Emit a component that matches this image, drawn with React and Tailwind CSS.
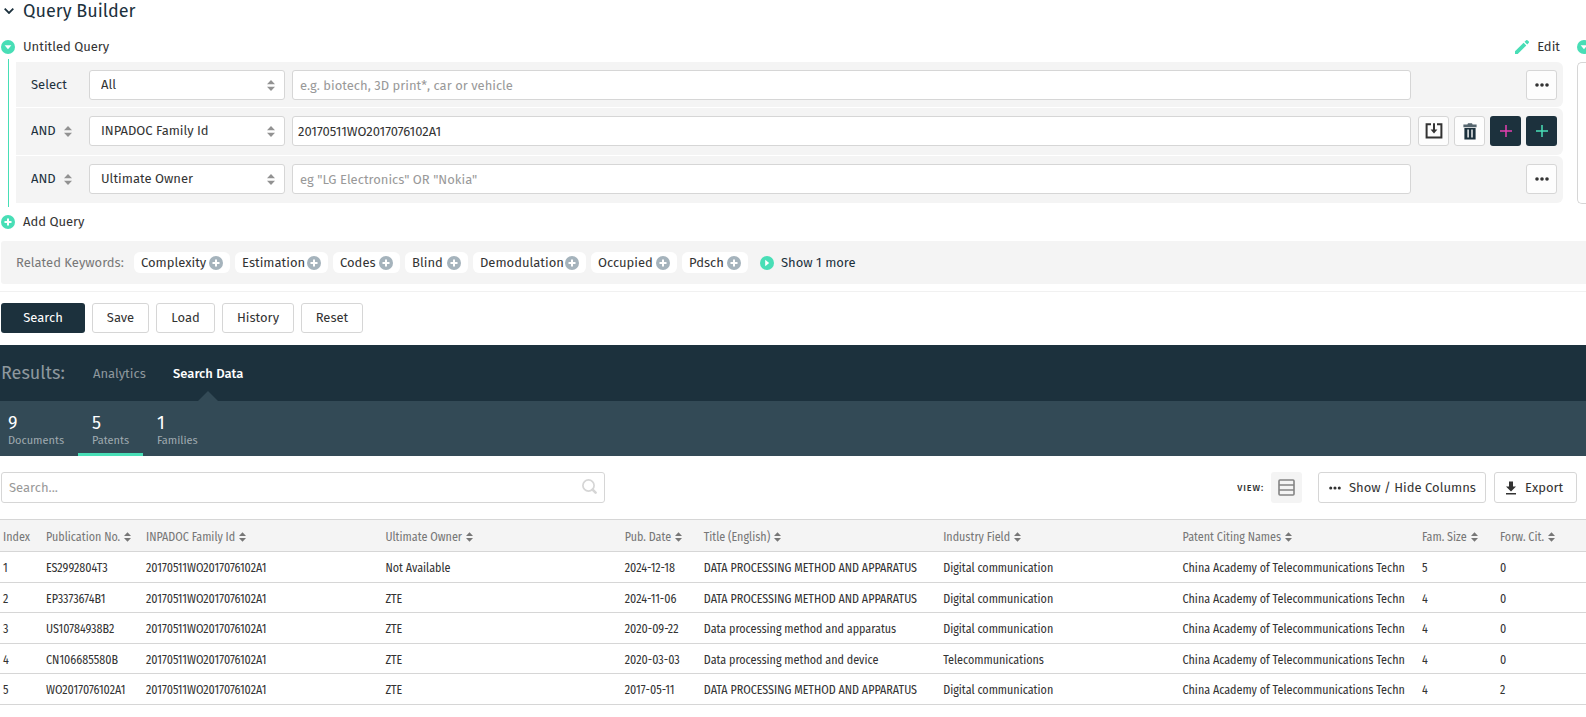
import React, { useState } from "react";

const keywords = [
  { label: "Complexity", width: "w-[96px]" },
  { label: "Estimation", width: "w-[93px]" },
  { label: "Codes", width: "w-[67px]" },
  { label: "Blind", width: "w-[63px]" },
  { label: "Demodulation", width: "w-[113px]" },
  { label: "Occupied", width: "w-[86px]" },
  { label: "Pdsch", width: "w-[66px]" },
];

const columns = [
  { label: "Index", width: "w-[43px]", sortable: false },
  { label: "Publication No.", width: "w-[100px]", sortable: true },
  { label: "INPADOC Family Id", width: "", sortable: true },
  { label: "Ultimate Owner", width: "", sortable: true },
  { label: "Pub. Date", width: "w-[79px]", sortable: true },
  { label: "Title (English)", width: "", sortable: true },
  { label: "Industry Field", width: "", sortable: true },
  { label: "Patent Citing Names", width: "", sortable: true },
  { label: "Fam. Size", width: "w-[78px]", sortable: true },
  { label: "Forw. Cit.", width: "w-[89px]", sortable: true },
];

const family = "20170511WO2017076102A1";
const citing = "China Academy of Telecommunications Techn";

const patents = [
  ["1", "ES2992804T3", family, "Not Available", "2024-12-18", "DATA PROCESSING METHOD AND APPARATUS", "Digital communication", citing, "5", "0"],
  ["2", "EP3373674B1", family, "ZTE", "2024-11-06", "DATA PROCESSING METHOD AND APPARATUS", "Digital communication", citing, "4", "0"],
  ["3", "US10784938B2", family, "ZTE", "2020-09-22", "Data processing method and apparatus", "Digital communication", citing, "4", "0"],
  ["4", "CN106685580B", family, "ZTE", "2020-03-03", "Data processing method and device", "Telecommunications", citing, "4", "0"],
  ["5", "WO2017076102A1", family, "ZTE", "2017-05-11", "DATA PROCESSING METHOD AND APPARATUS", "Digital communication", citing, "4", "2"],
];

const fieldOptions = ["All", "INPADOC Family Id", "Ultimate Owner"];

function SortArrows({ className }) {
  return (
    <svg viewBox="0 0 8 11" className={className} fill="currentColor" aria-hidden="true">
      <path d="M4 0 8 4.3H0zM4 11 0 6.7h8z" />
    </svg>
  );
}

function Dots({ className }) {
  return (
    <svg viewBox="0 0 14 4" className={className} fill="currentColor" aria-hidden="true">
      <circle cx="2" cy="2" r="1.8" />
      <circle cx="7" cy="2" r="1.8" />
      <circle cx="12" cy="2" r="1.8" />
    </svg>
  );
}

function CirclePlus({ className }) {
  return (
    <svg viewBox="0 0 14 14" className={className} aria-hidden="true">
      <circle cx="7" cy="7" r="7" fill="currentColor" />
      <path d="M7 3.5v7M3.5 7h7" stroke="#fff" strokeWidth="2" />
    </svg>
  );
}

function CircleDown() {
  return (
    <svg viewBox="0 0 14 14" className="size-3.5 shrink-0 text-[#48deb6]" aria-hidden="true">
      <circle cx="7" cy="7" r="7" fill="currentColor" />
      <path d="M3.6 5.2h6.8L7 9.2z" fill="#fff" />
    </svg>
  );
}

function IconButton({ label, dark, children }) {
  return (
    <button
      type="button"
      aria-label={label}
      className={
        dark
          ? "flex h-[30px] w-[31px] items-center justify-center rounded-[3px] bg-[#1c313d]"
          : "flex h-[30px] w-[31px] items-center justify-center rounded-[3px] border border-[#d6d6d6] bg-[#fdfdfd] text-[#333]"
      }
    >
      {children}
    </button>
  );
}

function Operator({ id }) {
  return (
    <div className="relative flex w-[41px] items-center">
      <select
        id={id}
        aria-label="Operator"
        defaultValue="AND"
        className="h-6 w-full appearance-none bg-transparent text-[13px] text-[#1c313d] outline-none"
      >
        <option>AND</option>
        <option>OR</option>
        <option>NOT</option>
      </select>
      <SortArrows className="pointer-events-none absolute right-0 h-[11px] w-2 text-[#929292]" />
    </div>
  );
}

function QueryRow({ id, first, field, value, placeholder, children }) {
  return (
    <div
      className={`flex items-center rounded-r-md bg-[#f4f4f4] pt-2 pr-1.5 pl-[15px] ${
        first ? "pb-[7px]" : "pb-[9px]"
      }`}
    >
      <div className="w-[58px] shrink-0 text-[13px] text-[#1c313d]">
        {first ? <label htmlFor={id}>Select</label> : <Operator id={id + "-op"} />}
      </div>
      <div className="relative flex w-[196px] shrink-0 items-center">
        <select
          id={id}
          aria-label="Field"
          defaultValue={field}
          className="h-[30px] w-full appearance-none rounded-[3px] border border-[#d6d6d6] bg-white pr-6 pl-[11px] text-[13px] text-[#333] outline-none"
        >
          {fieldOptions.map((o) => (
            <option key={o}>{o}</option>
          ))}
        </select>
        <SortArrows className="pointer-events-none absolute right-2.5 h-[11px] w-2 text-[#929292]" />
      </div>
      <input
        type="text"
        aria-label="Query text"
        defaultValue={value}
        placeholder={placeholder}
        className={`ml-[7px] h-[30px] min-w-0 flex-1 rounded-[3px] border border-[#d6d6d6] bg-white text-[13px] text-[#333] outline-none placeholder:text-[#999] ${
          value ? "px-[5px]" : "px-[7px]"
        }`}
      />
      <div className="ml-[7px] flex w-[139px] shrink-0 justify-end gap-[5px]">{children}</div>
    </div>
  );
}

export default function App() {
  const [search, setSearch] = useState("");

  return (
    <div className="w-full overflow-hidden bg-white pb-3 font-['Fira_Sans',Roboto,sans-serif] text-[13px] leading-4 text-[#333]">
      {/* Title */}
      <header className="flex h-[21px] items-center pl-1">
        <svg viewBox="0 0 10 6" className="h-1.5 w-2.5 text-[#1c313d]" fill="none" stroke="currentColor" strokeWidth="1.8" aria-hidden="true">
          <path d="M.7.7 5 5 9.3.7" />
        </svg>
        <h1 className="ml-[9px] text-lg leading-5 text-[#1c313d]">Query Builder</h1>
      </header>

      {/* Query editor */}
      <div className="mt-4 flex">
        <section className="min-w-0 flex-1">
          <div className="flex h-5 items-center justify-between pr-[3px] pl-px">
            <div className="flex items-center gap-2">
              <CircleDown />
              <span>Untitled Query</span>
            </div>
            <button type="button" className="flex items-center gap-2">
              <svg viewBox="0 0 14 14" className="size-3.5 text-[#48deb6]" fill="currentColor" aria-hidden="true">
                <path d="M0 11.3 8.6 2.7l2.7 2.7L2.7 14H0zM9.5 1.8 10.9.4a1.3 1.3 0 0 1 1.8 0l.9.9a1.3 1.3 0 0 1 0 1.8l-1.4 1.4z" />
              </svg>
              Edit
            </button>
          </div>
          <div className="flex pt-0.5">
            <div className="mr-[7px] ml-2 w-px bg-[#48deb6]" />
            <div className="mt-[3px] mb-1 flex min-w-0 flex-1 flex-col gap-px">
              <QueryRow id="q1" first field="All" placeholder="e.g. biotech, 3D print*, car or vehicle">
                <IconButton label="More">
                  <Dots className="h-1 w-3.5" />
                </IconButton>
              </QueryRow>
              <QueryRow id="q2" field="INPADOC Family Id" value="20170511WO2017076102A1">
                <IconButton label="Import">
                  <svg viewBox="0 0 18 16" className="h-4 w-[18px]" fill="none" stroke="currentColor" strokeWidth="2" aria-hidden="true">
                    <path d="M6 1.2H1.6v13.3h14.8V1.2H12M9 .3v8" />
                    <path d="M5.6 6.6 9 10.4l3.4-3.8z" fill="currentColor" stroke="none" />
                  </svg>
                </IconButton>
                <IconButton label="Delete">
                  <svg viewBox="0 0 14 17" className="h-[17px] w-3.5 text-[#1c313d]" fill="currentColor" aria-hidden="true">
                    <path d="M.4 1.6h4L5 .2h4l.6 1.4h4v2.6H.4z" opacity=".75" />
                    <path fillRule="evenodd" d="M1.4 5h11.2v11.6H1.4zM4.4 6.4v8.2h1.4V6.4zM8.3 6.4v8.2h1.4V6.4z" />
                  </svg>
                </IconButton>
                <IconButton label="Add group" dark>
                  <svg viewBox="0 0 12 12" className="size-3 text-[#e43fb0]" stroke="currentColor" strokeWidth="1.5" aria-hidden="true">
                    <path d="M6 0v12M0 6h12" />
                  </svg>
                </IconButton>
                <IconButton label="Add row" dark>
                  <svg viewBox="0 0 12 12" className="size-3 text-[#48deb6]" stroke="currentColor" strokeWidth="1.5" aria-hidden="true">
                    <path d="M6 0v12M0 6h12" />
                  </svg>
                </IconButton>
              </QueryRow>
              <QueryRow id="q3" field="Ultimate Owner" placeholder={'eg "LG Electronics" OR "Nokia"'}>
                <IconButton label="More">
                  <Dots className="h-1 w-3.5" />
                </IconButton>
              </QueryRow>
            </div>
          </div>
        </section>

        {/* Next query panel, continues past the right edge */}
        <section className="ml-3.5 flex w-[9px] shrink-0 flex-col">
          <div className="flex h-5 items-center">
            <CircleDown />
          </div>
          <div className="mt-[5px] mb-[3px] flex-1 rounded-l-[5px] border border-r-0 border-[#d6d6d6]" />
        </section>
      </div>

      <button type="button" className="mt-[7px] ml-px flex h-4 items-center gap-2">
        <CirclePlus className="size-3.5 text-[#48deb6]" />
        Add Query
      </button>

      {/* Keywords */}
      <div className="mt-[11px] ml-px flex h-[43px] items-center rounded-l-[3px] bg-[#f4f4f4] pl-[15px]">
        <span className="w-[118px] text-[#777]">Related Keywords:</span>
        <div className="flex gap-[5px]">
          {keywords.map((k) => (
            <button
              key={k.label}
              type="button"
              className={`flex h-[21px] items-center justify-between rounded-md bg-white px-[7px] ${k.width}`}
            >
              {k.label}
              <CirclePlus className="size-3.5 text-[#a5b3bc]" />
            </button>
          ))}
        </div>
        <button type="button" className="ml-3 flex items-center gap-[7px] text-[#1c313d]">
          <svg viewBox="0 0 14 14" className="size-3.5 text-[#48deb6]" aria-hidden="true">
            <circle cx="7" cy="7" r="7" fill="currentColor" />
            <path d="M5.2 3.8 9.2 7l-4 3.2z" fill="#fff" />
          </svg>
          Show 1 more
        </button>
      </div>

      {/* Actions */}
      <div className="mt-[7px] flex gap-[7px] border-t border-[#f1f1f1] pt-[11px] pb-3 pl-px">
        <button type="button" className="h-[30px] w-[84px] rounded-[3px] bg-[#1c313d] text-white">Search</button>
        <button type="button" className="h-[30px] w-[57px] rounded-[3px] border border-[#d6d6d6]">Save</button>
        <button type="button" className="h-[30px] w-[59px] rounded-[3px] border border-[#d6d6d6]">Load</button>
        <button type="button" className="h-[30px] w-[72px] rounded-[3px] border border-[#d6d6d6]">History</button>
        <button type="button" className="h-[30px] w-[62px] rounded-[3px] border border-[#d6d6d6]">Reset</button>
      </div>

      {/* Results tabs */}
      <nav className="flex h-14 items-center bg-[#1c313d] pl-px">
        <h2 className="w-[92px] text-lg leading-5 text-[#8e989e]">Results:</h2>
        <a href="#analytics" className="flex h-full w-20 items-center pt-0.5 text-[#8e989e]">Analytics</a>
        <a href="#data" className="relative flex h-full items-center pt-0.5 font-medium text-white">
          Search Data
          <svg viewBox="0 0 20 10" className="absolute bottom-0 left-1/2 h-2.5 w-5 -translate-x-1/2 text-[#334a56]" fill="currentColor" aria-hidden="true">
            <path d="M0 10 10 0l10 10z" />
          </svg>
        </a>
      </nav>
      <div className="flex h-[55px] bg-[#334a56] text-[11px] text-[#a0abb1]">
        <button type="button" className="w-[78px] border-b-[3px] border-transparent pt-2 pl-2 text-left">
          <span className="block text-lg leading-5 text-white">9</span>
          Documents
        </button>
        <button type="button" className="w-[65px] border-b-[3px] border-[#48deb6] pt-2 pl-3.5 text-left">
          <span className="block text-lg leading-5 text-white">5</span>
          Patents
        </button>
        <button type="button" className="border-b-[3px] border-transparent pt-2 pl-3.5 text-left">
          <span className="block text-lg leading-5 text-white">1</span>
          Families
        </button>
      </div>

      {/* Table tools */}
      <div className="flex items-center justify-between py-4 pr-[9px] pl-px">
        <div className="relative w-[604px]">
          <input
            type="text"
            aria-label="Search results"
            placeholder="Search..."
            value={search}
            onChange={(e) => setSearch(e.target.value)}
            className="block h-[31px] w-full rounded-[3px] border border-[#d6d6d6] pr-8 pl-[7px] text-[13px] outline-none placeholder:text-[#999]"
          />
          <svg viewBox="0 0 15 15" className="absolute top-[7px] right-2 size-[15px] text-[#d6d6d6]" fill="none" stroke="currentColor" aria-hidden="true">
            <circle cx="6.5" cy="6.5" r="5.6" strokeWidth="1.7" />
            <path d="m10.6 10.6 3 3" strokeWidth="2.6" strokeLinecap="round" />
          </svg>
        </div>
        <div className="flex items-center whitespace-nowrap">
          <span className="mr-[7px] text-[9px] font-medium tracking-widest">VIEW:</span>
          <button type="button" aria-label="Table view" className="flex size-[31px] items-center justify-center rounded-[3px] bg-[#f4f4f4]">
            <svg viewBox="0 0 17 17" className="size-[17px] text-[#848484]" fill="none" stroke="currentColor" strokeWidth="1.6" aria-hidden="true">
              <rect x="1" y="1" width="15" height="15" rx="1" />
              <path d="M1 6h15M1 11h15" />
            </svg>
          </button>
          <button type="button" className="ml-4 flex h-[31px] w-[168px] items-center rounded-[3px] border border-[#d6d6d6] pl-2.5">
            <Dots className="mr-2 h-1 w-3" />
            Show / Hide Columns
          </button>
          <button type="button" className="ml-2 flex h-[31px] w-[83px] items-center rounded-[3px] border border-[#d6d6d6] pl-2.5">
            <svg viewBox="0 0 12 14" className="mr-2 h-3.5 w-3" fill="currentColor" aria-hidden="true">
              <path d="M4 .5h4v5h3L6 10.5 1 5.5h3zM1 12h10v1.5H1z" />
            </svg>
            Export
          </button>
        </div>
      </div>

      <table className="w-full table-fixed border-t border-[#d6d6d6] text-left font-['Fira_Sans_Condensed','Liberation_Sans_Narrow',Roboto,sans-serif] text-xs whitespace-nowrap">
        <thead>
          <tr className="h-8 border-b border-[#d6d6d6] bg-[#f4f4f4] text-[#777]">
            {columns.map((c) => (
              <th key={c.label} scope="col" className={`p-0 pt-0.5 pl-[3px] font-normal ${c.width}`}>
                {c.sortable ? (
                  <button type="button" className="flex items-center gap-1">
                    {c.label}
                    <SortArrows className="h-2.5 w-[7px]" />
                  </button>
                ) : (
                  c.label
                )}
              </th>
            ))}
          </tr>
        </thead>
        <tbody>
          {patents.map((row) => (
            <tr key={row[0]} className="h-[31px] border-b border-[#d6d6d6] even:h-[30px]">
              {row.map((cell, i) => (
                <td key={i} className="overflow-hidden p-0 pt-0.5 pl-[3px]">
                  {cell}
                </td>
              ))}
            </tr>
          ))}
        </tbody>
      </table>
    </div>
  );
}
